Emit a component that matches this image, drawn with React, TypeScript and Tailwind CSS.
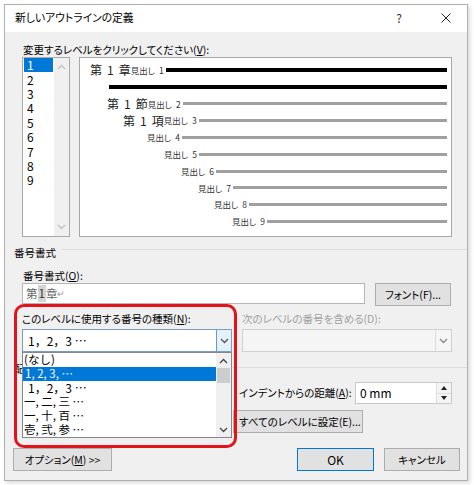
import type { ReactNode } from "react"

const Chevron = ({ up, className }: { up?: boolean; className?: string }) => (
  <svg width="9" height="6" viewBox="0 0 9 6" className={className}>
    <polyline
      points={up ? "1,5 4.5,1.5 8,5" : "1,1 4.5,4.5 8,1"}
      fill="none"
      stroke="currentColor"
      strokeWidth="1.3"
    />
  </svg>
)

type PreviewRow = {
  indent: string
  big?: [string, string]
  level?: number
  black?: boolean
}

const previewRows: PreviewRow[] = [
  { indent: "pl-[10px]", big: ["第", "章"], level: 1, black: true },
  { indent: "pl-[27px]", black: true },
  { indent: "pl-[27px]", big: ["第", "節"], level: 2 },
  { indent: "pl-[43px]", big: ["第", "項"], level: 3 },
  { indent: "pl-[67px]", level: 4 },
  { indent: "pl-[84px]", level: 5 },
  { indent: "pl-[101px]", level: 6 },
  { indent: "pl-[118px]", level: 7 },
  { indent: "pl-[134px]", level: 8 },
  { indent: "pl-[152px]", level: 9 },
]

const numberStyles = [
  { label: "(なし)", plain: false },
  { label: "1, 2, 3, …", plain: false, selected: true },
  { label: "1，2，3 …", plain: true },
  { label: "一, 二, 三 …", plain: false },
  { label: "一, 十, 百 …", plain: false },
  { label: "壱, 弐, 参 …", plain: false },
]

function Button({ className, children }: { className?: string; children: ReactNode }) {
  return (
    <div
      className={`flex h-[23px] items-center justify-center whitespace-nowrap border border-[#adadad] bg-[#e1e1e1] ${className ?? ""}`}
    >
      {children}
    </div>
  )
}

export default function App() {
  return (
    <div className="h-[485px] w-[474px] overflow-hidden bg-white pl-[4px] pt-[4px] text-[10.5px] text-black [font-family:'Noto_Sans_CJK_JP',sans-serif] [font-feature-settings:'palt']">
      <div className="relative flex h-[477px] w-[464px] flex-col border border-[#b0b0b0] bg-[#f0f0f0] shadow-[2px_2px_4px_rgba(0,0,0,0.15)]">
        {/* title bar */}
        <div className="flex h-[27px] items-center bg-white pb-[2px] pl-[10px]">
          <span className="text-[10.8px]">新しいアウトラインの定義</span>
          <span className="ml-auto text-[12px] text-[#333]">?</span>
          <svg width="10" height="10" viewBox="0 0 10 10" className="ml-[39px] mr-[16px] text-[#222]">
            <path d="M0.5 0.5 9.5 9.5 M9.5 0.5 0.5 9.5" stroke="currentColor" strokeWidth="1" />
          </svg>
        </div>

        <div className="ml-[18px] mt-[10px] h-[15px] leading-[15px]">
          変更するレベルをクリックしてください(<span className="underline">V</span>):
        </div>

        <div className="ml-[17px] flex h-[180px] gap-[9px]">
          {/* level list */}
          <div className="flex w-[48px] border border-[#a8a8a8] bg-white">
            <div className="flex flex-1 flex-col text-[12px]">
              {["1", "2", "3", "4", "5", "6", "7", "8", "9"].map((n, i) => (
                <div key={n} className="flex h-[14.4px] items-center">
                  <span
                    className={`ml-[1px] flex h-full w-[29px] items-center pl-[3px] ${i === 0 ? "bg-[#0078d7] text-white" : ""}`}
                  >
                    {n}
                  </span>
                </div>
              ))}
            </div>
            <div className="flex w-[15px] flex-col items-center justify-between bg-[#f0f0f0] py-[6px] text-[#c2c2c2]">
              <Chevron up />
              <Chevron />
            </div>
          </div>

          {/* preview */}
          <div className="flex w-[373px] flex-col border border-[#a8a8a8] bg-white pr-[4px] pt-[4px]">
            {previewRows.map((row, i) => (
              <div key={i} className={`flex h-[16.8px] items-center ${row.indent}`}>
                {row.big && (
                  <span className="text-[12px] text-[#222]">
                    {row.big[0]}
                    <span className="mx-[5px]">1</span>
                    {row.big[1]}
                  </span>
                )}
                {row.level && (
                  <span className="flex items-center text-[8.5px] text-[#333]">
                    見出し<span className="ml-[4px]">{row.level}</span>
                  </span>
                )}
                <div
                  className={`ml-[2px] flex-1 ${row.black ? "h-[4px] bg-black" : "h-[3px] bg-[#a0a0a0]"}`}
                />
              </div>
            ))}
          </div>
        </div>

        {/* 番号書式 */}
        <div className="mt-[8px] flex h-[16px] items-start pl-[9px]">
          <span className="leading-[16px]">番号書式</span>
          <div className="ml-[6px] mt-[4px] flex-1 border-t border-[#dcdcdc]" />
        </div>

        <div className="ml-[18px] mt-[8px] h-[14px] leading-[14px]">
          番号書式(<span className="underline">O</span>):
        </div>

        <div className="ml-[17px] flex h-[23px] items-start">
          <div className="flex h-[21px] w-[343px] items-center border border-[#b5b5b5] bg-white pl-[3px] text-[11.5px] text-[#666]">
            <span>第</span>
            <span className="bg-[#d4d4d4] px-[1px] text-[#333]">1</span>
            <span>章</span>
            <span className="text-[9px] text-[#999]">↵</span>
          </div>
          <Button className="ml-[10px] w-[76px]">フォント(F)...</Button>
        </div>

        <div className="ml-[17px] mt-[5px] flex gap-[10px]">
          <div className="w-[210px]">
            <div className="h-[15px] whitespace-nowrap leading-[15px]">
              このレベルに使用する番号の種類(<span className="underline">N</span>):
            </div>
            <div className="mt-[3px] flex h-[23px] items-center border border-[#7a9cc0] bg-white">
              <span className="flex-1 pl-[5px] text-[12px] [font-feature-settings:normal]">1，2，3 …</span>
              <div className="flex h-full w-[15px] items-center justify-center border-l border-[#569de5] bg-[#e5f1fb] text-[#555]">
                <Chevron />
              </div>
            </div>
          </div>
          <div className="w-[210px]">
            <div className="h-[15px] whitespace-nowrap leading-[15px] text-[#a0a0a0]">次のレベルの番号を含める(D):</div>
            <div className="mt-[3px] flex h-[23px] items-center justify-end border border-[#d0d0d0] bg-[#f5f5f5]">
              <div className="flex h-full w-[16px] items-center justify-center border-l border-[#dedede] text-[#888]">
                <Chevron />
              </div>
            </div>
          </div>
        </div>

        {/* 配置 */}
        <div className="mt-[9px] flex h-[16px] items-start pl-[9px]">
          <span className="leading-[16px]">配置</span>
          <div className="ml-[6px] mt-[6px] flex-1 border-t border-[#dcdcdc]" />
        </div>

        <div className="ml-[234px] mt-[5px] flex h-[22px] items-center">
          <span className="w-[116px] whitespace-nowrap">
            インデントからの距離(<span className="underline">A</span>):
          </span>
          <div className="flex h-[22px] w-[97px] items-center border border-[#c8c8c8] bg-white">
            <span className="flex-1 pl-[4px] text-[12px]">0 mm</span>
            <div className="flex h-full w-[15px] flex-col border-l border-[#e0e0e0]">
              <div className="flex flex-1 items-center justify-center border-b border-[#e0e0e0] bg-[#f4f4f4]">
                <svg width="6" height="4" viewBox="0 0 6 4">
                  <path d="M0 4 3 0 6 4Z" fill="#222" />
                </svg>
              </div>
              <div className="flex flex-1 items-center justify-center bg-[#f4f4f4]">
                <svg width="6" height="4" viewBox="0 0 6 4">
                  <path d="M0 0 3 4 6 0Z" fill="#222" />
                </svg>
              </div>
            </div>
          </div>
        </div>

        <div className="ml-[228px] mt-[6px] flex">
          <Button className="w-[130px] !justify-start pl-[5px]">すべてのレベルに設定(E)...</Button>
        </div>

        <div className="mt-[15px] flex pl-[8px]">
          <Button className="w-[99px]">
            オプション(<span className="underline">M</span>) &gt;&gt;
          </Button>
          <Button className="ml-[185px] w-[77px] !border-[#0078d7] text-[12px]">OK</Button>
          <Button className="ml-[10px] w-[76px]">キャンセル</Button>
        </div>

        {/* open dropdown */}
        <div className="absolute left-[17px] top-[347px] flex h-[86px] w-[210px] border border-[#828790] bg-white">
          <div className="flex flex-1 flex-col">
            {numberStyles.map((s) => (
              <div
                key={s.label}
                className={`flex h-[14px] items-center whitespace-pre ${s.selected ? "bg-[#0078d7] pl-[2px] text-white" : ""} ${s.plain ? "pl-[5px] text-[12px] [font-feature-settings:normal]" : "pl-[1px] text-[11.5px] [font-feature-settings:normal]"}`}
              >
                {s.label}
              </div>
            ))}
          </div>
          <div className="flex w-[15px] flex-col items-center bg-[#f0f0f0] text-[#444]">
            <div className="flex h-[15px] items-center justify-center">
              <Chevron up />
            </div>
            <div className="h-[15px] w-[13px] bg-[#cdcdcd]" />
            <div className="mt-auto flex h-[15px] items-center justify-center">
              <Chevron />
            </div>
          </div>
        </div>

        {/* highlight frame */}
        <div className="absolute left-[9px] top-[299px] h-[144px] w-[223px] rounded-[10px] border-[3px] border-[#e3131b]" />
      </div>
    </div>
  )
}
